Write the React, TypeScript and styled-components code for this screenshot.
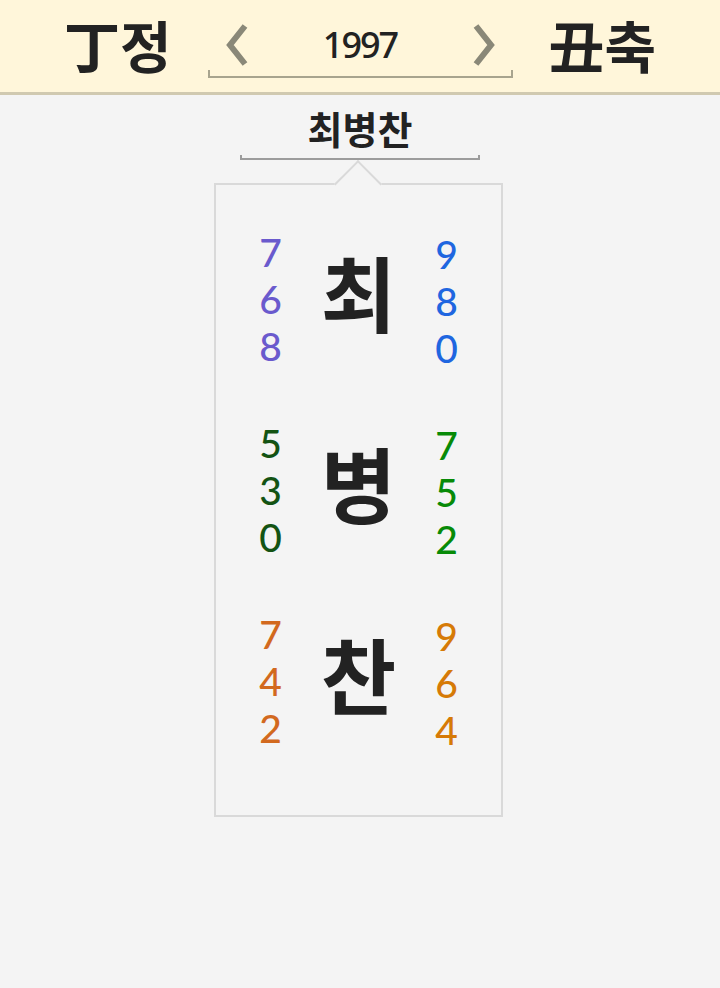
import React from 'react';
import styled, { createGlobalStyle } from 'styled-components';

type Row = {
  hangul: string;
  left: string[];
  right: string[];
  leftColor: string;
  rightColor: string;
};

const rows: Row[] = [
  { hangul: '최', left: ['7', '6', '8'], right: ['9', '8', '0'], leftColor: '#6a5acd', rightColor: '#1f66e0' },
  { hangul: '병', left: ['5', '3', '0'], right: ['7', '5', '2'], leftColor: '#135313', rightColor: '#078a07' },
  { hangul: '찬', left: ['7', '4', '2'], right: ['9', '6', '4'], leftColor: '#d2691e', rightColor: '#d67a06' },
];

const Chevron = ({ dir }: { dir: 'left' | 'right' }) => (
  <svg width="26" height="44" viewBox="0 0 26 44">
    <polyline
      points={dir === 'left' ? '21,3 6,22 21,41' : '5,3 20,22 5,41'}
      fill="none"
      stroke="#8a8878"
      strokeWidth="6"
    />
  </svg>
);

const App = () => {
  return (
    <>
      <GlobalStyle />
      <Header>
        <Ganji>丁정</Ganji>
        <YearNav>
          <Chevron dir="left" />
          <Year>1997</Year>
          <Chevron dir="right" />
        </YearNav>
        <Ganji>丑축</Ganji>
      </Header>
      <Main>
        <NameTitle>최병찬</NameTitle>
        <NameBracket />
        <Card>
          {rows.map((row) => (
            <CharRow key={row.hangul}>
              <Digits color={row.leftColor} $shift={-2}>
                {row.left.map((d, i) => (
                  <Digit key={i}>{d}</Digit>
                ))}
              </Digits>
              <BigChar>{row.hangul}</BigChar>
              <Digits color={row.rightColor} $shift={0}>
                {row.right.map((d, i) => (
                  <Digit key={i}>{d}</Digit>
                ))}
              </Digits>
            </CharRow>
          ))}
        </Card>
      </Main>
    </>
  );
};

const GlobalStyle = createGlobalStyle`
  body {
    margin: 0;
    background: #f4f4f4;
    font-family: "Noto Sans CJK KR", "Noto Sans", sans-serif;
  }
`;

const Header = styled.header`
  height: 92px;
  background: #fff6da;
  border-bottom: 3px solid #d0c9b0;
  display: flex;
  align-items: center;
  justify-content: center;
  gap: 36px;
`;

const Ganji = styled.div`
  font-family: "Noto Sans CJK KR", sans-serif;
  font-size: 56px;
  font-weight: 700;
  color: #222;
  line-height: 1;
  margin-top: -4px;
`;

const YearNav = styled.div`
  width: 305px;
  height: 44px;
  margin-top: -2px;
  position: relative;
  display: flex;
  align-items: center;
  justify-content: space-between;
  padding: 0 16px;
  box-sizing: border-box;

  &::after {
    content: '';
    position: absolute;
    left: 0;
    right: 0;
    bottom: -11px;
    height: 6px;
    border: 2px solid #a8a48e;
    border-top: none;
  }
`;

const Year = styled.span`
  font-family: "Noto Sans", sans-serif;
  font-size: 36px;
  font-weight: 500;
  letter-spacing: -2px;
  color: #222;
  line-height: 1;
`;

const Main = styled.main`
  display: flex;
  flex-direction: column;
  align-items: center;
`;

const NameTitle = styled.h1`
  margin: 6px 0 0;
  font-family: "Noto Sans CJK KR", sans-serif;
  font-size: 38px;
  font-weight: 700;
  color: #222;
  line-height: 54px;
`;

const NameBracket = styled.div`
  width: 240px;
  height: 5px;
  border: 2px solid #9c9c9c;
  border-top: none;
  box-sizing: border-box;
`;

const Card = styled.section`
  position: relative;
  width: 289px;
  height: 634px;
  margin-top: 23px;
  margin-right: 3px;
  border: 2px solid #d9d9d9;
  box-sizing: border-box;
  padding-top: 46px;
  display: flex;
  flex-direction: column;
  gap: 50px;

  &::before {
    content: '';
    position: absolute;
    top: -18px;
    left: 50%;
    width: 32px;
    height: 32px;
    margin-left: -18px;
    background: #f4f4f4;
    border-top: 2px solid #d9d9d9;
    border-left: 2px solid #d9d9d9;
    transform: rotate(45deg);
  }
`;

const CharRow = styled.div`
  display: grid;
  grid-template-columns: 40px 96px 40px;
  column-gap: 20px;
  justify-content: center;
  align-items: center;
`;

const Digits = styled.div<{ color: string; $shift: number }>`
  display: flex;
  flex-direction: column;
  align-items: center;
  font-family: Lato, "Noto Sans", sans-serif;
  font-size: 39px;
  font-weight: 500;
  color: ${(p) => p.color};
  transform: translateY(${(p) => p.$shift}px);
`;

const Digit = styled.span`
  display: block;
  height: 47px;
  line-height: 47px;
`;

const BigChar = styled.div`
  text-align: center;
  font-family: "Noto Sans CJK KR", sans-serif;
  font-size: 82px;
  font-weight: 700;
  color: #222;
  line-height: 1;
  margin-top: -22px;
`;

export default App;
